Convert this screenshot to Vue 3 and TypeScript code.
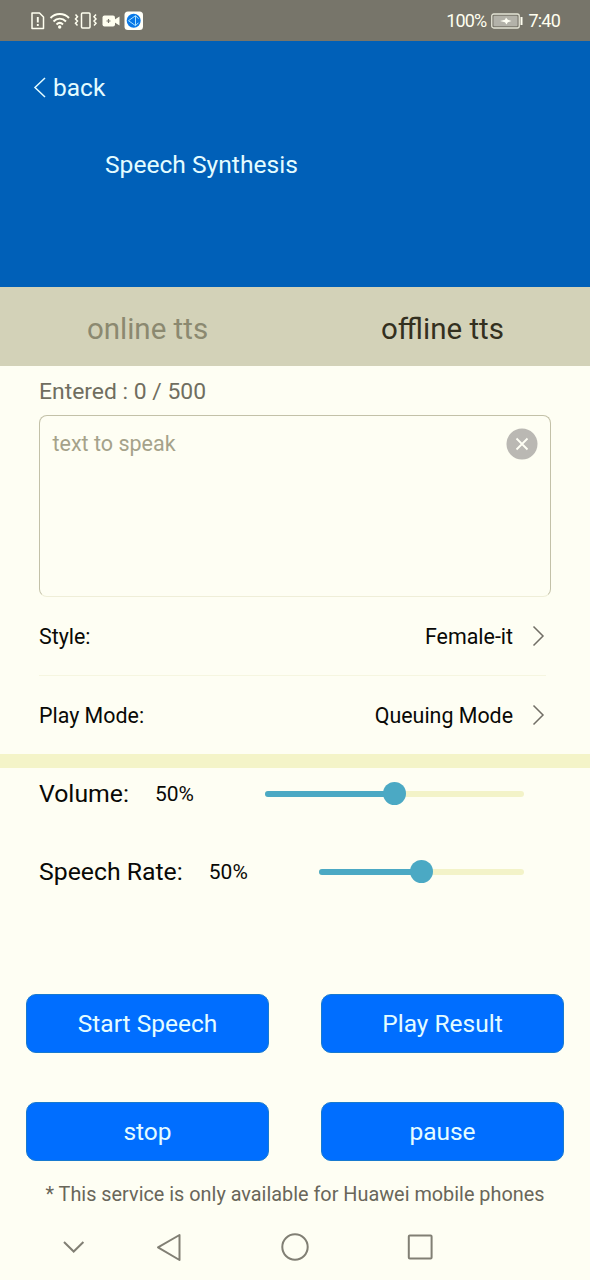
<script setup lang="ts">
import { ref } from 'vue'

const tabs = ['online tts', 'offline tts']
const activeTab = ref(1)
const options = [
  { label: 'Style:', value: 'Female-it' },
  { label: 'Play Mode:', value: 'Queuing Mode' },
]
const sliders = [
  { label: 'Volume:', value: 50 },
  { label: 'Speech Rate:', value: 50 },
]
const actions = ['Start Speech', 'Play Result', 'stop', 'pause']
</script>

<template>
  <div class="screen">
    <div class="status">
      <svg class="status-icons" width="116" height="22" viewBox="0 0 116 22" fill="none" stroke="#fffff0" stroke-width="1.5">
        <path d="M2 3h7.500l4 4v11.500h-11.500z" stroke-linejoin="round" />
        <path d="M7.800 7v5.500M7.800 14v2" stroke-width="1.900" />
        <path d="M20.500 8c5-5.300 13.500-5.300 18.500 0M23.500 11.500c3.500-3.800 9-3.800 12.500 0M26.500 14.500c2-2 4.500-2 6.500 0" stroke-width="1.900" />
        <circle cx="29.700" cy="17" r="1.700" fill="#fffff0" stroke="none" />
        <rect x="51.500" y="3" width="8.500" height="15" rx="1" />
        <path d="M45.500 4.500l2 2.200-2 2.200 2 2.200-2 2.200 2 2.200M66 4.500l-2 2.200 2 2.200-2 2.200 2 2.200-2 2.200" stroke-width="1.500" />
        <rect x="72.500" y="5.500" width="12.500" height="11" rx="2" fill="#fffff0" stroke="none" />
        <path d="M84 10l5.500-3.500v9L84 12z" fill="#fffff0" stroke="none" />
        <path d="M76.500 11h4M78.500 9v4" stroke="#77756c" stroke-width="1.200" />
        <rect x="94.500" y="1.500" width="18.500" height="18.500" rx="3.500" fill="#fffff8" stroke="none" />
        <circle cx="103.700" cy="10.700" r="7" fill="#0878e8" stroke="none" />
        <path d="M98.500 10.700l7-5v10zM105.500 5.700l3 3M105.500 15.700l3-3" stroke="#a8e2ff" stroke-width="1" />
      </svg>
      <div class="status-right">
        <span>100%</span>
        <svg width="32" height="16" viewBox="0 0 32 16" fill="none">
          <rect x="0.750" y="1" width="27.500" height="14" rx="2" stroke="#e4e4d5" stroke-width="1.300" />
          <rect x="2.500" y="2.800" width="24" height="10.400" rx="1" fill="#b3b2a9" />
          <path d="M9 8l5-1.200 1-2.300 1.800 2.300 3.700 1.200-3.700 1.200-1.300 2.300-1.500-2.300z" fill="#fffff4" />
          <path d="M30.500 4v8" stroke="#fffff0" stroke-width="2" />
        </svg>
        <span>7:40</span>
      </div>
    </div>

    <header class="header">
      <div class="back">
        <svg width="14" height="22" viewBox="0 0 14 22" fill="none" stroke="#e4fcff" stroke-width="1.500"><path d="M12 1L2 10.500l10 9.500" /></svg>
        <span>back</span>
      </div>
      <div class="title">Speech Synthesis</div>
    </header>

    <nav class="tabs">
      <div v-for="(tab, i) in tabs" :key="tab" class="tab" :class="{ active: i === activeTab }" @click="activeTab = i">{{ tab }}</div>
    </nav>

    <div class="count">Entered : 0 / 500</div>
    <div class="input-box">
      <span>text to speak</span>
      <svg width="32" height="32" viewBox="0 0 32 32"><circle cx="16" cy="16" r="15.500" fill="#bab8b3" /><path d="M10.500 10.500l11 11M21.500 10.500l-11 11" stroke="#fffff5" stroke-width="1.800" /></svg>
    </div>

    <div class="options">
      <div v-for="o in options" :key="o.label" class="option">
        <span>{{ o.label }}</span>
        <span class="option-value">{{ o.value }}</span>
        <svg width="14" height="22" viewBox="0 0 14 22" fill="none" stroke="#716e66" stroke-width="1.500"><path d="M1.500 1.500L11 11l-9.500 9.500" /></svg>
      </div>
    </div>
    <div class="band"></div>

    <div class="sliders">
      <div v-for="s in sliders" :key="s.label" class="slider-row">
        <span class="slider-label">{{ s.label }}</span>
        <span class="percent">{{ s.value }}%</span>
        <div class="track">
          <div class="fill" :style="{ width: s.value + '%' }"></div>
          <div class="thumb" :style="{ left: s.value + '%' }"></div>
        </div>
      </div>
    </div>

    <div class="actions">
      <button v-for="a in actions" :key="a">{{ a }}</button>
    </div>
    <p class="note">* This service is only available for Huawei mobile phones</p>

    <svg class="system-nav" width="590" height="66" viewBox="0 0 590 66" fill="none" stroke="#817f74" stroke-width="2">
      <path d="M64 28l9.700 9.500 9.700-9.500" />
      <path d="M179.500 21v25L158 33.300z" stroke-linejoin="round" />
      <circle cx="295" cy="33" r="12.700" />
      <rect x="408.800" y="21.500" width="22.800" height="23" rx="1" />
    </svg>
  </div>
</template>

<style>
body {
  margin: 0;
}
</style>

<style scoped>
.screen {
  width: 590px;
  height: 1280px;
  overflow: hidden;
  background: #fefef3;
  font-family: Roboto, sans-serif;
  color: #090906;
}
.status {
  height: 41px;
  box-sizing: border-box;
  padding: 0 30px;
  display: flex;
  align-items: center;
  justify-content: space-between;
  background: #77756a;
}
.status-right {
  display: flex;
  align-items: center;
  gap: 5px;
  color: #fffff0;
  font-size: 18px;
  letter-spacing: -0.800px;
}
.header {
  height: 246px;
  box-sizing: border-box;
  padding: 31px 33px 0;
  background: #0060b8;
  color: #e4fcff;
  font-size: 24.500px;
  line-height: 32px;
}
.back {
  display: flex;
  align-items: center;
  gap: 6px;
}
.title {
  margin: 45px 0 0 72px;
  font-size: 24.600px;
}
.tabs {
  height: 79px;
  display: grid;
  grid-template-columns: 1fr 1fr;
  background: #d3d2b8;
  font-size: 29.500px;
  line-height: 85px;
  text-align: center;
  color: #8b8970;
}
.tab.active {
  color: #33301f;
}
.count {
  margin: 12px 39px 0;
  font-size: 22.900px;
  line-height: 28px;
  color: #706e60;
}
.input-box {
  height: 182px;
  box-sizing: border-box;
  margin: 9px 39px 0;
  padding: 12px 12px 0 12.500px;
  display: flex;
  align-items: flex-start;
  justify-content: space-between;
  border: 1px solid #c3c1a8;
  border-bottom-color: #efeed8;
  border-radius: 8px;
  font-size: 21.500px;
  line-height: 32px;
  color: #a5a28a;
}
.options {
  padding: 0 44px 0 39px;
}
.option {
  height: 78px;
  display: flex;
  align-items: center;
  font-size: 21.400px;
}
.option + .option {
  border-top: 1px solid #f6f6e0;
}
.option-value {
  margin-left: auto;
  margin-right: 19px;
}
.band {
  height: 14px;
  background: #f4f4c8;
}
.sliders {
  padding: 0 66px 0 39px;
}
.slider-row {
  height: 105px;
  display: flex;
  align-items: center;
}
.slider-row:first-child {
  height: 51px;
}
.slider-label {
  font-size: 24.800px;
}
.percent {
  margin-left: 26px;
  margin-right: 71px;
  font-size: 21px;
}
.track {
  position: relative;
  flex: 1;
  height: 6px;
  border-radius: 3px;
  background: #f3f3c8;
}
.fill {
  height: 6px;
  border-radius: 3px;
  background: #4ba9c4;
}
.thumb {
  position: absolute;
  top: -8.500px;
  width: 23px;
  height: 23px;
  margin-left: -11px;
  border-radius: 50%;
  background: #4ba9c4;
}
.actions {
  margin: 70px 26px 0;
  display: grid;
  grid-template-columns: 243px 243px;
  justify-content: space-between;
  row-gap: 49px;
}
.actions button {
  height: 59px;
  padding: 0;
  border: 1px solid #177ad0;
  border-radius: 10px;
  background: #006eff;
  color: #e4fcff;
  font: 24.500px Roboto, sans-serif;
}
.note {
  margin: 20px 0 0;
  font-size: 19.850px;
  line-height: 27px;
  text-align: center;
  color: #69665a;
}
.system-nav {
  display: block;
  margin-top: 6px;
}
</style>
